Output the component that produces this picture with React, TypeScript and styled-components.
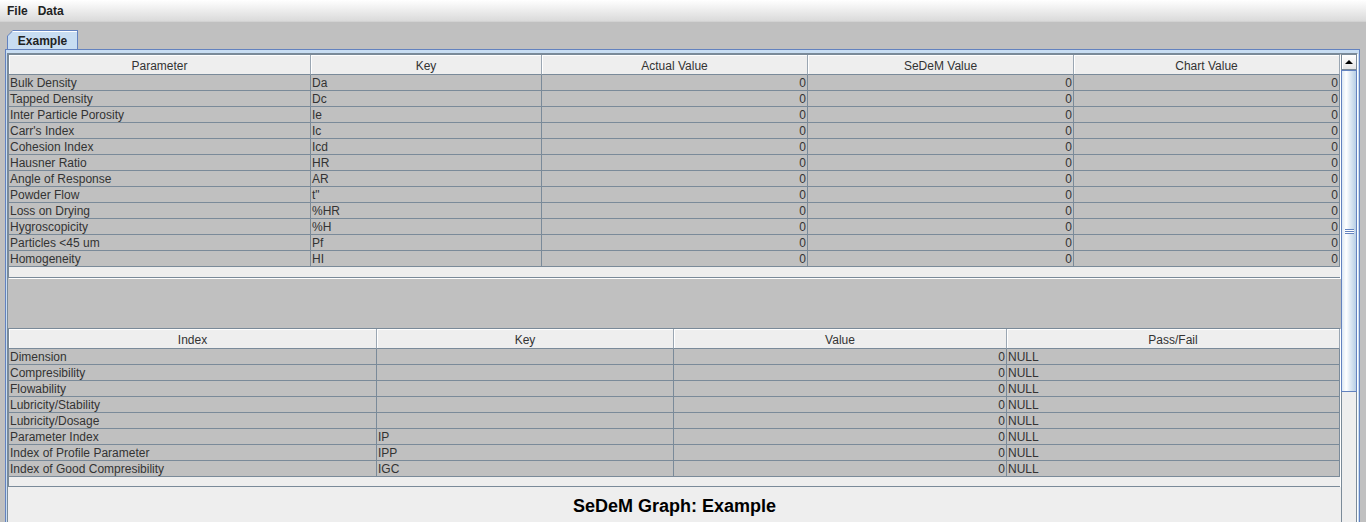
import React from 'react';
import styled, { createGlobalStyle } from 'styled-components';

type Align = 'left' | 'right' | 'center';
type Column = { title: string; width: number; align: Align };

const GRID = '#7a8a99';
const OCEAN_BLUE = '#6382bf';
const CELL_BG = '#c0c0c0';
const PANEL_BG = '#eeeeee';

const GlobalStyle = createGlobalStyle`
  html, body {
    margin: 0;
    padding: 0;
  }
  body {
    font-family: 'Liberation Sans', Arial, sans-serif;
    font-size: 12px;
    color: #333333;
    background: ${CELL_BG};
  }
  * {
    box-sizing: border-box;
  }
`;

const paramColumns: Column[] = [
  { title: 'Parameter', width: 302, align: 'left' },
  { title: 'Key', width: 231, align: 'left' },
  { title: 'Actual Value', width: 266, align: 'right' },
  { title: 'SeDeM Value', width: 266, align: 'right' },
  { title: 'Chart Value', width: 266, align: 'right' },
];

const paramRows: string[][] = [
  ['Bulk Density', 'Da'],
  ['Tapped Density', 'Dc'],
  ['Inter Particle Porosity', 'Ie'],
  ["Carr's Index", 'Ic'],
  ['Cohesion Index', 'Icd'],
  ['Hausner Ratio', 'HR'],
  ['Angle of Response', 'AR'],
  ['Powder Flow', 't"'],
  ['Loss on Drying', '%HR'],
  ['Hygroscopicity', '%H'],
  ['Particles <45 um', 'Pf'],
  ['Homogeneity', 'HI'],
].map((r) => [...r, '0', '0', '0']);

const indexColumns: Column[] = [
  { title: 'Index', width: 368, align: 'left' },
  { title: 'Key', width: 297, align: 'left' },
  { title: 'Value', width: 333, align: 'right' },
  { title: 'Pass/Fail', width: 333, align: 'left' },
];

const indexRows: string[][] = [
  ['Dimension', ''],
  ['Compresibility', ''],
  ['Flowability', ''],
  ['Lubricity/Stability', ''],
  ['Lubricity/Dosage', ''],
  ['Parameter Index', 'IP'],
  ['Index of Profile Parameter', 'IPP'],
  ['Index of Good Compresibility', 'IGC'],
].map((r) => [...r, '0', 'NULL']);

const DataTable = ({
  columns,
  rows,
  height,
  gapTop,
}: {
  columns: Column[];
  rows: string[][];
  height: number;
  gapTop: number;
}) => {
  const template = columns.map((c) => c.width + 'px').join(' ');
  return (
    <Style.TablePane $height={height} $gapTop={gapTop}>
      <Style.Row $template={template}>
        {columns.map((col) => (
          <Style.HeaderCell key={col.title}>{col.title}</Style.HeaderCell>
        ))}
      </Style.Row>
      {rows.map((row, idx) => (
        <Style.Row $template={template} key={'row-' + idx}>
          {row.map((value, cIdx) => (
            <Style.Cell key={'cell-' + idx + '-' + cIdx} $align={columns[cIdx].align}>
              {value}
            </Style.Cell>
          ))}
        </Style.Row>
      ))}
    </Style.TablePane>
  );
};

const App = () => {
  return (
    <>
      <GlobalStyle />
      <Style.Window>
        <Style.MenuBar>
          <Style.MenuItem>File</Style.MenuItem>
          <Style.MenuItem>Data</Style.MenuItem>
        </Style.MenuBar>
        <Style.TabArea>
          <Style.TabStrip>
            <Style.TabOuter>
              <Style.TabInner>Example</Style.TabInner>
            </Style.TabOuter>
          </Style.TabStrip>
          <Style.TabContent>
            <Style.ScrollPane>
              <Style.Viewport>
                <DataTable columns={paramColumns} rows={paramRows} height={224} gapTop={0} />
                <DataTable columns={indexColumns} rows={indexRows} height={159} gapTop={50} />
                <Style.GraphPanel>
                  <Style.GraphTitle>SeDeM Graph: Example</Style.GraphTitle>
                </Style.GraphPanel>
              </Style.Viewport>
              <Style.ScrollBar>
                <Style.ArrowButton>
                  <Style.ArrowUp />
                </Style.ArrowButton>
                <Style.Thumb>
                  <Style.Grip />
                </Style.Thumb>
                <Style.Track />
              </Style.ScrollBar>
            </Style.ScrollPane>
          </Style.TabContent>
        </Style.TabArea>
      </Style.Window>
    </>
  );
};

export default App;

const Style = {
  Window: styled.div`
    width: 1366px;
    height: 522px;
    overflow: hidden;
    display: flex;
    flex-direction: column;
    background: ${CELL_BG};
  `,
  MenuBar: styled.div`
    height: 22px;
    flex: none;
    display: flex;
    align-items: center;
    padding: 1px 0 0 2px;
    background: linear-gradient(to bottom, #ffffff, #dadada);
    border-bottom: 1px solid #d2d2d2;
  `,
  MenuItem: styled.span`
    padding: 0 5px;
    font-weight: 700;
    font-size: 12px;
    color: #222222;
  `,
  TabArea: styled.div`
    flex: 1;
    min-height: 0;
    display: flex;
    flex-direction: column;
    padding: 8px 6px 0 5px;
  `,
  TabStrip: styled.div`
    height: 19px;
    flex: none;
    display: flex;
    padding-left: 2px;
  `,
  TabOuter: styled.div`
    width: 71px;
    height: 19px;
    padding: 1px 1px 0 1px;
    background: ${OCEAN_BLUE};
    clip-path: polygon(6px 0, 100% 0, 100% 100%, 0 100%, 0 6px);
  `,
  TabInner: styled.div`
    height: 100%;
    display: flex;
    align-items: center;
    justify-content: center;
    padding-top: 1px;
    background: #c8ddf2;
    box-shadow: inset 0 1px 0 #ffffff;
    clip-path: polygon(5px 0, 100% 0, 100% 100%, 0 100%, 0 5px);
    font-weight: 700;
    font-size: 12px;
    color: #222222;
  `,
  TabContent: styled.div`
    flex: 1;
    min-height: 0;
    display: flex;
    padding: 3px 1px 0 1px;
    background: #c8ddf2;
    border: 1px solid ${OCEAN_BLUE};
    border-bottom: none;
  `,
  ScrollPane: styled.div`
    flex: 1;
    min-width: 0;
    display: flex;
    border-top: 1px solid ${GRID};
    border-left: 1px solid ${GRID};
    border-right: 1px solid #ffffff;
  `,
  Viewport: styled.div`
    flex: 1;
    min-width: 0;
    display: flex;
    flex-direction: column;
    background: ${CELL_BG};
  `,
  TablePane: styled.div<{ $height: number; $gapTop: number }>`
    flex: none;
    width: 1332px;
    height: ${({ $height }) => $height}px;
    margin-top: ${({ $gapTop }) => $gapTop}px;
    background: ${PANEL_BG};
    border-top: 1px solid ${GRID};
    border-left: 1px solid ${GRID};
    border-bottom: 1px solid ${GRID};
    box-shadow: 1px 1px 0 #ffffff;
    overflow: hidden;
  `,
  Row: styled.div<{ $template: string }>`
    display: grid;
    grid-template-columns: ${({ $template }) => $template};
  `,
  HeaderCell: styled.div`
    height: 20px;
    line-height: 23px;
    text-align: center;
    background: ${PANEL_BG};
    border-right: 1px solid #9aa6b2;
    border-bottom: 1px solid ${GRID};
    box-shadow: inset 1px 1px 0 #ffffff;
    font-size: 12px;
    color: #333333;
    white-space: nowrap;
    overflow: hidden;
  `,
  Cell: styled.div<{ $align: Align }>`
    height: 16px;
    line-height: 17px;
    padding: 0 1px;
    text-align: ${({ $align }) => $align};
    background: ${CELL_BG};
    border-right: 1px solid ${GRID};
    border-bottom: 1px solid ${GRID};
    font-size: 12px;
    color: #333333;
    white-space: nowrap;
    overflow: hidden;
  `,
  GraphPanel: styled.div`
    flex: 1;
    display: flex;
    justify-content: center;
    padding-top: 9px;
    background: ${PANEL_BG};
  `,
  GraphTitle: styled.h2`
    margin: 0;
    font-size: 18px;
    line-height: 20px;
    font-weight: 700;
    color: #000000;
  `,
  ScrollBar: styled.div`
    width: 16px;
    flex: none;
    display: flex;
    flex-direction: column;
  `,
  ArrowButton: styled.div`
    height: 16px;
    flex: none;
    display: flex;
    align-items: center;
    justify-content: center;
    background: linear-gradient(to bottom, #ffffff, #e6e6e6);
    border: 1px solid ${GRID};
    box-shadow: inset 1px 1px 0 #ffffff;
  `,
  ArrowUp: styled.span`
    width: 0;
    height: 0;
    margin-top: -1px;
    border-left: 4px solid transparent;
    border-right: 4px solid transparent;
    border-bottom: 4px solid #000000;
  `,
  Thumb: styled.div`
    height: 322px;
    flex: none;
    display: flex;
    align-items: center;
    justify-content: center;
    border: 1px solid ${OCEAN_BLUE};
    background: linear-gradient(
      to right,
      #dde8f3 0%,
      #ffffff 30%,
      #dde8f3 60%,
      #b8cfe5 100%
    );
  `,
  Grip: styled.div`
    width: 9px;
    height: 5px;
    background: linear-gradient(
      to bottom,
      ${OCEAN_BLUE} 0 1px,
      #ffffff 1px 2px,
      ${OCEAN_BLUE} 2px 3px,
      #ffffff 3px 4px,
      ${OCEAN_BLUE} 4px 5px
    );
  `,
  Track: styled.div`
    flex: 1;
    background: ${PANEL_BG};
    border-left: 1px solid ${GRID};
    border-right: 1px solid ${GRID};
  `,
};
